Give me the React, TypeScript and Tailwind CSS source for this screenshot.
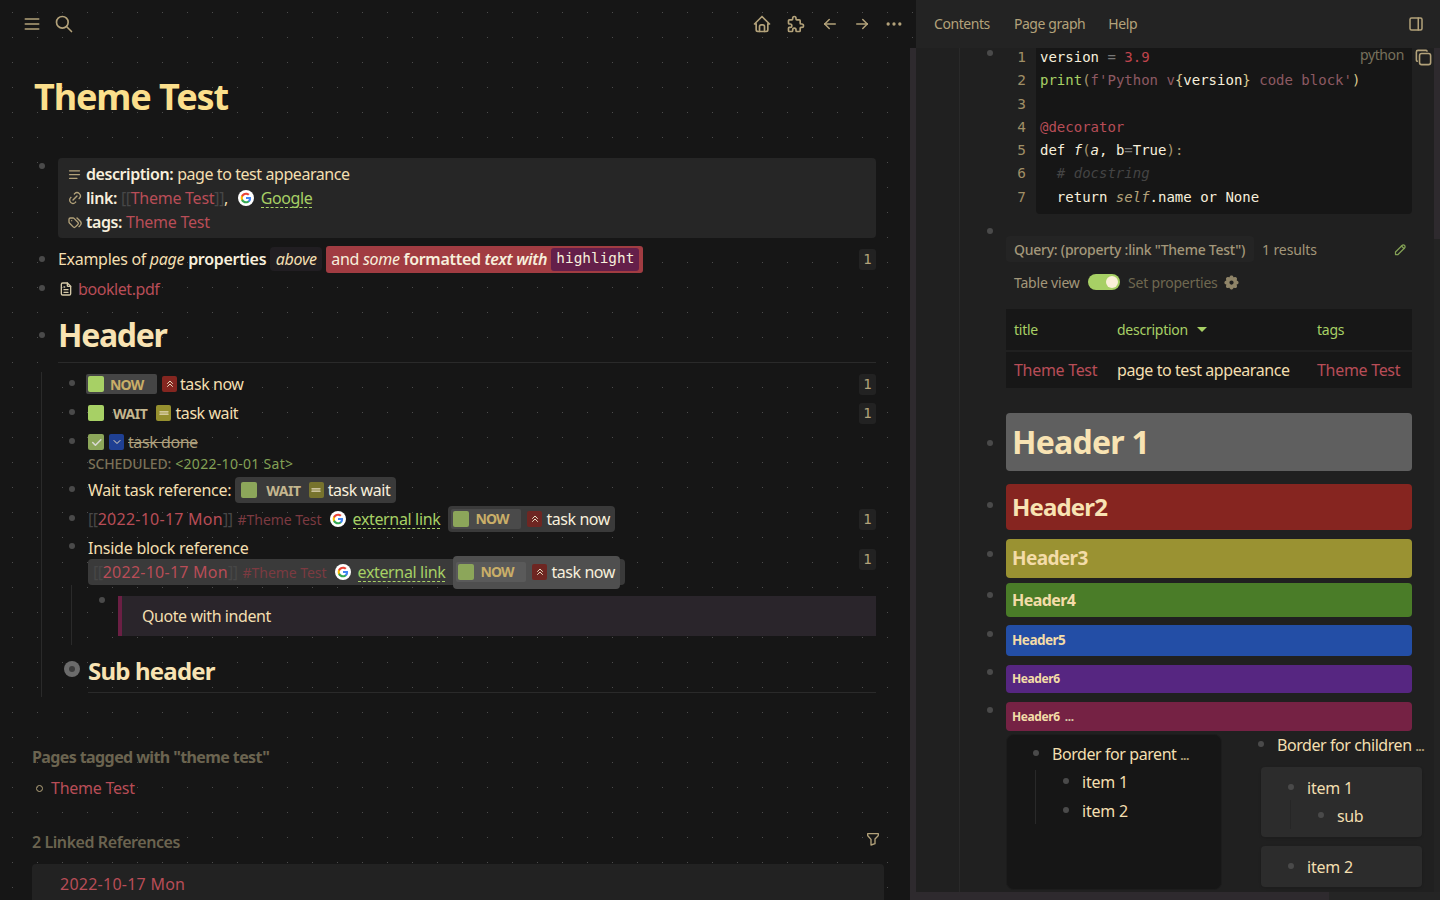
import React from "react";
import {
  TbMenu2, TbSearch, TbHome, TbPuzzle, TbArrowLeft, TbArrowRight, TbDots, TbLink, TbTags, TbFileText,
  TbCopy, TbPencil, TbFilter, TbLayoutSidebarRight, TbChevronsUp, TbChevronDown, TbEqual, TbCheck,
  TbAlignJustified, TbSettingsFilled,
} from "react-icons/tb";

const Dot = ({ className = "" }: { className?: string }) => (
  <span className={`block w-[6px] h-[6px] rounded-full shrink-0 bg-[#4a4a4a] ${className}`} />
);

const Google = ({ className = "" }: { className?: string }) => (
  <svg viewBox="0 0 24 24" className={`w-4 h-4 shrink-0 ${className}`}>
    <circle cx="12" cy="12" r="12" fill="#fff" />
    <path fill="#4285F4" d="M19.6 12.2c0-.6-.1-1.1-.2-1.600H12v3h4.300c-.2 1-.7 1.800-1.600 2.400v2h2.600c1.500-1.400 2.300-3.400 2.300-5.800z" />
    <path fill="#34A853" d="M12 20c2.200 0 4-.7 5.300-2l-2.600-2c-.7.5-1.600.8-2.700.8-2.100 0-3.900-1.400-4.500-3.300H4.800v2.100C6.100 18.200 8.900 20 12 20z" />
    <path fill="#FBBC05" d="M7.500 13.500c-.2-.5-.3-1-.3-1.500s.1-1 .3-1.500V8.400H4.800C4.300 9.500 4 10.700 4 12s.3 2.500.8 3.600l2.700-2.100z" />
    <path fill="#EA4335" d="M12 7.200c1.200 0 2.200.4 3.100 1.200l2.300-2.300C16 4.800 14.200 4 12 4 8.900 4 6.100 5.800 4.800 8.400l2.700 2.100c.6-1.900 2.400-3.300 4.500-3.300z" />
  </svg>
);

const Badge = () => (
  <span className="w-[17px] h-[21px] rounded-[3px] bg-[#222222] text-[#b3a27a] text-[14px] tracking-normal flex items-center justify-center font-['DejaVu_Sans_Mono',monospace] shrink-0">1</span>
);

const Check = ({ className = "bg-[#a7d065]" }: { className?: string }) => (
  <span className={`w-4 h-4 rounded-[2px] shrink-0 ${className}`} />
);

const Prio = ({ kind, dim }: { kind: "a" | "b" | "c"; dim?: boolean }) => {
  const bg = kind === "a" ? (dim ? "bg-[#6e2622]" : "bg-[#842620]") : kind === "b" ? (dim ? "bg-[#77732d]" : "bg-[#96902f]") : "bg-[#1f4093]";
  return (
    <span className={`w-[15px] h-4 rounded-[2px] flex items-center justify-center shrink-0 text-[#e8dcc0] ${bg}`}>
      {kind === "a" ? <TbChevronsUp size={12} /> : kind === "b" ? <TbEqual size={14} /> : <TbChevronDown size={12} />}
    </span>
  );
};

const NowRef = ({ className, pill }: { className: string; pill: string }) => (
  <span className={`flex items-center h-[26px] rounded-[4px] text-[#f7efdc] ${className}`}>
    <span className={`flex items-center h-5 w-[70px] rounded-[2px] pl-[2px] ${pill}`}>
      <Check className="bg-[#8ca65a]" />
      <span className="ml-[6px] text-[14px] tracking-[-0.8px] font-bold text-[#c9ae68] leading-5">NOW</span>
    </span>
    <span className="ml-[6px]"><Prio kind="a" dim /></span>
    <span className="ml-[4px]">task now</span>
  </span>
);

const LinkRowInner = () => (
  <>
    <span className="text-[#474747]">[[</span>
    <span className="text-[#b84d57] tracking-[0.25px]">2022-10-17 Mon</span>
    <span className="text-[#474747]">]]</span>
    <span className="ml-[5px] text-[14px] tracking-[-0.05px] text-[#7c3a41]">#Theme Test</span>
    <Google className="ml-[8px]" />
    <span className="ml-[7px] text-[#a7d065] border-b border-dashed border-[#a7d065] leading-[18px] tracking-[-0.35px]">external link</span>
  </>
);

const Line = ({ children }: { children: React.ReactNode }) => <div className="h-[23.3px] whitespace-pre">{children}</div>;

const Toolbar = () => (
  <div className="h-12 flex items-center justify-between pl-[22px] pr-[12px] text-[#b3a27a] shrink-0">
    <div className="flex items-center gap-[8px]">
      <TbMenu2 size={20} />
      <TbSearch size={20} className="ml-[4px]" />
    </div>
    <div className="flex items-center">
      <TbHome size={20} />
      <TbPuzzle size={20} className="ml-[14px]" />
      <TbArrowLeft size={18} className="ml-[15px]" />
      <TbArrowRight size={18} className="ml-[14px]" />
      <TbDots size={20} className="ml-[13px]" />
    </div>
  </div>
);

const Left = () => (
  <div className="relative w-[916px] h-full shrink-0 overflow-hidden bg-[#161616] bg-[radial-gradient(circle,#4c4c4c_0.7px,transparent_1px)] bg-[size:25px_25px]">
    <Toolbar />
    <div className="absolute right-0 top-12 bottom-0 w-[6px] bg-[#2e2a2e]" />
    <div className="pl-[32px] pr-[40px]">
      <h1 className="ml-[2px] mt-[25px] h-12 leading-[48px] text-[36px] tracking-[-1.1px] font-bold text-[#fbdf8c]">Theme Test</h1>

      <div className="flex mt-[37px]">
        <Dot className="ml-[7px] mr-[13px] mt-[5px]" />
        <div className="flex-1 h-20 bg-[#262626] rounded-[4px] pt-[4px] pl-[9px] leading-6">
          <div className="flex items-center h-6">
            <TbAlignJustified size={15} className="text-[#b3a27a] mr-[4px]" />
            <b className="font-semibold text-[#f7efdc]">description:</b><span className="ml-[4px]">page to test appearance</span>
          </div>
          <div className="flex items-center h-6">
            <TbLink size={16} className="text-[#b3a27a] mr-[3px]" />
            <b className="font-semibold text-[#f7efdc]">link:</b>
            <span className="ml-[4px] text-[#474747]">[[</span><span className="text-[#b84d57] tracking-[-0.25px]">Theme Test</span><span className="text-[#474747]">]]</span>,
            <Google className="ml-[10px]" />
            <span className="ml-[7px] text-[#a7d065] border-b border-dashed border-[#a7d065] leading-[18px]">Google</span>
          </div>
          <div className="flex items-center h-6">
            <TbTags size={16} className="text-[#b3a27a] mr-[3px]" />
            <b className="font-semibold text-[#f7efdc]">tags:</b><span className="ml-[4px] text-[#b84d57] tracking-[-0.25px]">Theme Test</span>
          </div>
        </div>
      </div>

      <div className="flex mt-[8px] h-[26px]">
        <Dot className="ml-[7px] mr-[13px] mt-[10px]" />
        <div className="flex-1 flex items-center whitespace-nowrap tracking-[-0.3px]">
          <span>Examples of <i>page</i> <b className="font-semibold text-[#f7efdc]">properties</b></span>
          <span className="ml-[4px] h-6 w-[52px] justify-center flex items-center rounded-[4px] bg-[#211e22]"><i>above</i></span>
          <span className="ml-[4px] h-[27px] w-[317px] pl-[5px] flex items-center rounded-[3px] bg-[#a13c42] text-[#f7efdc]">
            and&nbsp;<i>some</i>&nbsp;<b className="font-semibold">formatted&nbsp;<i>text with</i></b>
            <span className="ml-[4px] h-[23px] px-[5px] flex items-center rounded-[3px] bg-[#641f4a] text-[14.4px] tracking-normal font-['DejaVu_Sans_Mono',monospace]">highlight</span>
          </span>
          <span className="ml-auto"><Badge /></span>
        </div>
      </div>

      <div className="flex mt-[5px] h-6">
        <Dot className="ml-[7px] mr-[13px] mt-[8px]" />
        <div className="flex items-center">
          <TbFileText size={16} className="mr-[4px] text-[#d5c9a8]" />
          <span className="text-[#b84d57]">booklet.pdf</span>
        </div>
      </div>

      <div className="flex mt-[12px]">
        <Dot className="ml-[7px] mr-[13px] mt-[19px]" />
        <h2 className="flex-1 h-[50px] leading-[44px] border-b border-[#2a2a2a] text-[32px] tracking-[-1.3px] font-bold text-[#f8e3b3]">Header</h2>
      </div>

      <div className="ml-[9px] border-l border-[#2a2a2a] pb-[4px]">
        <div className="flex mt-[9px] h-6 items-center pl-[27px]">
          <Dot className="mr-[13px] -mt-[2px]" />
          <div className="flex-1 flex items-center -ml-[2px]">
            <span className="flex items-center w-[71px] h-5 rounded-[2px] bg-[#454545] pl-[2px]">
              <Check />
              <span className="ml-[6px] text-[14px] tracking-[-0.8px] font-bold text-[#c9ae68]">NOW</span>
            </span>
            <span className="ml-[5px]"><Prio kind="a" /></span>
            <span className="ml-[3px]">task now</span>
            <span className="ml-auto"><Badge /></span>
          </div>
        </div>
        <div className="flex mt-[5px] h-6 items-center pl-[27px]">
          <Dot className="mr-[13px] -mt-[2px]" />
          <div className="flex-1 flex items-center">
            <Check />
            <span className="ml-[9px] text-[14px] font-bold text-[#c4b68f]">WAIT</span>
            <span className="ml-[9px]"><Prio kind="b" /></span>
            <span className="ml-[4px]">task wait</span>
            <span className="ml-auto"><Badge /></span>
          </div>
        </div>
        <div className="flex mt-[5px] h-6 items-center pl-[27px]">
          <Dot className="mr-[13px] -mt-[2px]" />
          <div className="flex-1 flex items-center">
            <span className="w-4 h-4 rounded-[2px] bg-[#8ca65a] flex items-center justify-center text-[#d8d8d0]"><TbCheck size={13} strokeWidth={3} /></span>
            <span className="ml-[5px]"><Prio kind="c" /></span>
            <span className="ml-[4px] line-through text-[#ad9f7c]">task done</span>
          </div>
        </div>
        <div className="h-[18px] pl-[46px] flex items-center text-[14px]">
          <span className="font-medium text-[#7b7158] tracking-[-0.15px]">SCHEDULED:</span>
          <span className="ml-[4px] text-[#83a055] tracking-[0.3px]">&lt;2022-10-01 Sat&gt;</span>
        </div>
        <div className="flex mt-[5px] h-[26px] items-center pl-[27px]">
          <Dot className="mr-[13px] -mt-[2px]" />
          <span className="tracking-[-0.28px]">Wait task reference:</span>
          <span className="ml-[4px] h-[26px] flex items-center rounded-[4px] bg-[#3a3a3a] pl-[6px] pr-[6px] text-[#f7efdc]">
            <Check className="bg-[#8ca65a]" />
            <span className="ml-[9px] text-[14px] font-bold text-[#c4b68f]">WAIT</span>
            <span className="ml-[8px]"><Prio kind="b" dim /></span>
            <span className="ml-[4px]">task wait</span>
          </span>
        </div>
        <div className="flex mt-[3px] h-[26px] items-center pl-[27px]">
          <Dot className="mr-[13px] -mt-[2px]" />
          <div className="flex-1 flex items-center whitespace-nowrap">
            <LinkRowInner />
            <span className="ml-[8px]"><NowRef className="bg-[#3a3a3a] pl-[3px] pr-[5px]" pill="bg-[#4a4a4a]" /></span>
            <span className="ml-auto"><Badge /></span>
          </div>
        </div>
        <div className="flex mt-[4px] pl-[27px]">
          <Dot className="mr-[13px] mt-[7px]" />
          <div className="flex-1">
            <div className="flex h-6 items-center justify-between">
              <span className="tracking-[-0.25px]">Inside block reference</span>
            </div>
            <div className="-mt-[1px] flex justify-between items-center">
              <div className="h-[26px] w-[537px] flex items-center rounded-[4px] bg-[#3a3a3a] pl-[5px] whitespace-nowrap">
                <LinkRowInner />
                <span className="ml-[8px]"><NowRef className="h-[33px] bg-[#4f4f4f] pl-[3px] pr-[5px]" pill="bg-[#5a5a5a]" /></span>
              </div>
              <span className="-mt-[25px]"><Badge /></span>
            </div>
          </div>
        </div>
        <div className="ml-[29px] border-l border-[#2a2a2a] pl-[27px] pt-[11px] pb-[9px] flex">
          <Dot className="mr-[13px] mt-[1px]" />
          <div className="flex-1 h-10 bg-[#2a252b] border-l-4 border-[#6b1f44] pl-5 flex items-center">Quote with indent</div>
        </div>
        <div className="flex mt-[4px]">
          <span className="ml-[22px] mr-[8px] mt-[12px] w-4 h-4 rounded-full bg-[#6b6b6b] flex items-center justify-center shrink-0">
            <span className="w-[6px] h-[6px] rounded-full bg-[#3c3c3c]" />
          </span>
          <h3 className="flex-1 h-[44px] leading-[44px] border-b border-[#2a2a2a] text-[24px] tracking-[-0.8px] font-bold text-[#f8e3b3]">Sub header</h3>
        </div>
      </div>

      <div className="mt-[48px] h-6 leading-6 font-bold text-[#6b6450] tracking-[-0.6px]">Pages tagged with "theme test"</div>
      <div className="mt-[7px] h-6 flex items-center">
        <span className="ml-[4px] mr-[8px] w-[7px] h-[7px] rounded-full border border-[#b3a27a]" />
        <span className="text-[#b84d57] tracking-[-0.25px]">Theme Test</span>
      </div>
      <div className="mt-[30px] h-6 flex items-center justify-between -mr-[5px]">
        <span className="font-semibold text-[#6b6450]">2 Linked References</span>
        <TbFilter size={16} className="text-[#b3a27a] -mt-[6px]" />
      </div>
      <div className="mt-[10px] -mr-[8px] bg-[#222222] rounded-t-[4px] pl-7 pt-2 h-[100px] leading-6">
        <span className="text-[#b84d57] tracking-[0.25px]">2022-10-17 Mon</span>
      </div>
    </div>
  </div>
);

const Right = () => (
  <div className="relative flex-1 h-full overflow-hidden bg-[#202020]">
    <div className="h-12 bg-[#232323] flex items-center pl-[18px] pr-[15px] text-[14px] text-[#b3a27a]">
      <span className="-mt-[1px]">Contents</span>
      <span className="-mt-[1px] ml-[24px]">Page graph</span>
      <span className="-mt-[1px] ml-[23px]">Help</span>
      <TbLayoutSidebarRight size={18} className="ml-auto" />
    </div>
    <div className="ml-[43px] border-l border-[#292929] w-[470px] h-[852px]">
      <div className="pl-[27px]">
        <div className="flex relative">
          <Dot className="bg-[#3f3f3f] mt-[2px] mr-[13px]" />
          <div className="w-[406px] h-[166px] flex">
            <div className="w-[30px] overflow-hidden text-[#a08f66] text-[14.4px] tracking-normal font-['DejaVu_Sans_Mono',monospace] leading-[23.3px] text-center pl-[1px]">
              <div className="-mt-[2px]">{[1, 2, 3, 4, 5, 6, 7].map((n) => <div key={n} className="h-[23.3px]">{n}</div>)}</div>
            </div>
            <div className="relative flex-1 bg-[#161616] rounded-b-[4px] pl-[4px] overflow-hidden text-[14px] tracking-normal leading-[23.3px] text-[#f7efdc] font-['DejaVu_Sans_Mono',monospace]">
              <div className="-mt-[2px]">
                <Line>version <span className="text-[#777]">=</span> <span className="text-[#c0444c]">3.9</span></Line>
                <Line><span className="text-[#a7d065]">print</span><span className="text-[#a8966f]">(</span><span className="text-[#8d5a63]">f'Python v</span><span className="text-[#d9c98f]">{"{"}</span>version<span className="text-[#d9c98f]">{"}"}</span><span className="text-[#8d5a63]"> code block'</span><span className="text-[#d9c98f]">)</span></Line>
                <Line> </Line>
                <Line><span className="text-[#b84d57]">@decorator</span></Line>
                <Line>def <i className="text-[#f7efdc]">f</i><span className="text-[#a8966f]">(</span><i>a</i>, b<span className="text-[#777]">=</span>True<span className="text-[#a8966f]">):</span></Line>
                <Line>  <i className="text-[#444444]"># docstring</i></Line>
                <Line>  return <i className="text-[#b3a27a]">self</i>.name or None</Line>
              </div>
            </div>
          </div>
          <span className="absolute left-[373px] -top-[2px] text-[14px] leading-[18px] tracking-[-0.4px] text-[#77705c]">python</span>
          <TbCopy size={19} className="absolute left-[427px] top-[0px] text-[#b3a27a]" />
        </div>

        <div className="flex mt-[14px]">
          <Dot className="bg-[#3f3f3f] mr-[13px]" />
          <div className="w-[406px] pt-[8px]">
            <div className="flex items-center h-[26px] text-[14px] whitespace-nowrap">
              <span className="h-[26px] w-[248px] px-[8px] flex items-center rounded-[4px] bg-[#242424] font-medium text-[#a3977a] tracking-[-0.25px]">Query: (property :link "Theme Test")</span>
              <span className="ml-[8px] text-[#a3977a] tracking-[-0.1px]">1 results</span>
              <TbPencil size={15} className="ml-auto mr-[4px] text-[#83a055]" />
            </div>
            <div className="flex items-center h-6 mt-[8px] pl-[8px] text-[14px] tracking-[-0.2px]">
              <span className="w-[66px] text-[#a3977a]">Table view</span>
              <span className="ml-[8px] w-8 h-4 rounded-full bg-[#a7d065] flex items-center justify-end pr-[2px]"><span className="w-3 h-3 rounded-full bg-[#faf0d8]" /></span>
              <span className="ml-[8px] text-[#6f6850]">Set properties</span>
              <TbSettingsFilled size={17} className="ml-[5px] text-[#8f8468]" />
            </div>
            <div className="mt-[15px]">
              <div className="h-[41px] bg-[#171717] flex items-center text-[14px] text-[#a7d065] tracking-[-0.25px]">
                <span className="w-[111px] pl-[8px]">title</span>
                <span className="w-[200px] flex items-center">description<span className="ml-[9px] w-0 h-0 border-l-[5px] border-r-[5px] border-t-[5px] border-l-transparent border-r-transparent border-t-[#a7d065]" /></span>
                <span>tags</span>
              </div>
              <div className="mt-[2px] h-9 bg-[#171717] flex items-center">
                <span className="w-[111px] pl-[8px] text-[#b84d57] tracking-[-0.3px]">Theme Test</span>
                <span className="w-[200px]">page to test appearance</span>
                <span className="text-[#b84d57] tracking-[-0.3px]">Theme Test</span>
              </div>
            </div>
          </div>
        </div>

        <div className="flex mt-[25px]">
          <Dot className="bg-[#3f3f3f] mt-[27px] mr-[13px]" />
          <div className="w-[406px] h-[58px] rounded-[4px] bg-[#5f5f5f] pl-[6px] flex items-center text-[32px] tracking-[-0.75px] font-bold text-[#f8e3b3]">Header 1</div>
        </div>
        <div className="flex mt-[13px]">
          <Dot className="bg-[#3f3f3f] mt-[18px] mr-[13px]" />
          <div className="w-[406px] h-[46px] rounded-[4px] bg-[#862520] pl-[6px] flex items-center text-[24px] tracking-[-0.85px] font-bold text-[#f8e3b3]">Header2</div>
        </div>
        <div className="flex mt-[9px]">
          <Dot className="bg-[#3f3f3f] mt-[12px] mr-[13px]" />
          <div className="w-[406px] h-[39px] rounded-[4px] bg-[#9a9232] pl-[6px] flex items-center text-[19px] tracking-[-0.6px] font-bold text-[#f3dca8]">Header3</div>
        </div>
        <div className="flex mt-[5px]">
          <Dot className="bg-[#3f3f3f] mt-[9px] mr-[13px]" />
          <div className="w-[406px] h-[34px] rounded-[4px] bg-[#4a7c28] pl-[6px] flex items-center text-[16px] tracking-[-0.57px] font-bold text-[#f3dca8]">Header4</div>
        </div>
        <div className="flex mt-[8px]">
          <Dot className="bg-[#3f3f3f] mt-[6px] mr-[13px]" />
          <div className="w-[406px] h-[31px] rounded-[4px] bg-[#234ea6] pl-[6px] flex items-center text-[13.5px] tracking-[-0.5px] font-bold text-[#f3dca8]">Header5</div>
        </div>
        <div className="flex mt-[9px]">
          <Dot className="bg-[#3f3f3f] mt-[4px] mr-[13px]" />
          <div className="w-[406px] h-[28px] rounded-[4px] bg-[#562681] pl-[6px] flex items-center text-[12px] tracking-[-0.4px] font-bold text-[#f3dca8]">Header6</div>
        </div>
        <div className="flex mt-[9px]">
          <Dot className="bg-[#3f3f3f] mt-[5px] mr-[13px]" />
          <div className="w-[406px] h-[29px] rounded-[4px] bg-[#752244] pl-[6px] flex items-center text-[12px] tracking-[-0.4px] font-bold text-[#f3dca8]">Header6<span className="ml-[5px] text-[#d8c9a8]">...</span></div>
        </div>

        <div className="flex mt-[3px] ml-[19px]">
          <div className="w-[216px] h-[156px] rounded-[8px] bg-[#161616] border border-[#1c1c1c] shrink-0 pt-[7px]">
            <div className="flex pl-[26px] h-6">
              <Dot className="mt-[8px] mr-[13px]" />
              <span className="leading-6">Border for parent <span className="text-[12px] text-[#b3a27a] font-bold">...</span></span>
            </div>
            <div className="ml-[28px] border-l border-[#292929] pb-[1px]">
              <div className="flex pl-[27px] h-6 mt-[4px]">
                <Dot className="mt-[8px] mr-[13px]" />
                <span className="leading-6 tracking-[-0.2px]">item 1</span>
              </div>
              <div className="flex pl-[27px] h-6 mt-[5px]">
                <Dot className="mt-[8px] mr-[13px]" />
                <span className="leading-6 tracking-[-0.2px]">item 2</span>
              </div>
            </div>
          </div>
          <div className="ml-[36px] -mt-[1px] w-[170px] shrink-0">
            <div className="flex h-6 whitespace-nowrap">
              <Dot className="mt-[8px] mr-[13px]" />
              <span className="leading-6">Border for children <span className="text-[12px] text-[#b3a27a] font-bold">...</span></span>
            </div>
            <div className="mt-[10px] ml-[3px] w-[161px] h-[70px] rounded-[4px] bg-[#2c2c2c] pt-[9px] pl-[27px] shadow-sm">
              <div className="flex h-6">
                <Dot className="bg-[#3f3f3f] mt-[8px] mr-[13px]" />
                <span className="leading-6 tracking-[-0.2px]">item 1</span>
              </div>
              <div className="ml-[2px] border-l border-[#262626] h-[29px] pl-[27px] pt-[4px] flex">
                <Dot className="bg-[#3f3f3f] mt-[8px] mr-[13px]" />
                <span className="leading-6">sub</span>
              </div>
            </div>
            <div className="mt-[9px] ml-[3px] w-[161px] h-[41px] rounded-[4px] bg-[#2c2c2c] pt-[9px] pl-[27px] flex shadow-sm">
              <Dot className="bg-[#3f3f3f] mt-[8px] mr-[13px]" />
              <span className="leading-6 tracking-[-0.2px]">item 2</span>
            </div>
          </div>
        </div>
      </div>
    </div>
    <div className="absolute right-0 top-12 bottom-0 w-[6px] bg-[#232323]" />
    <div className="absolute right-0 top-12 h-[191px] w-[6px] bg-[#2e2a2e]" />
    <div className="absolute left-0 bottom-0 right-0 h-2 bg-[#252525]" />
    <div className="absolute left-0 bottom-0 w-[413px] h-2 bg-[#2e2a2e]" />
  </div>
);

export default function App() {
  return (
    <div className="flex w-[1440px] h-[900px] overflow-hidden bg-[#161616] text-[16px] tracking-[-0.43px] text-[#f3dfb0] font-['Noto_Sans',sans-serif]">
      <Left />
      <Right />
    </div>
  );
}
